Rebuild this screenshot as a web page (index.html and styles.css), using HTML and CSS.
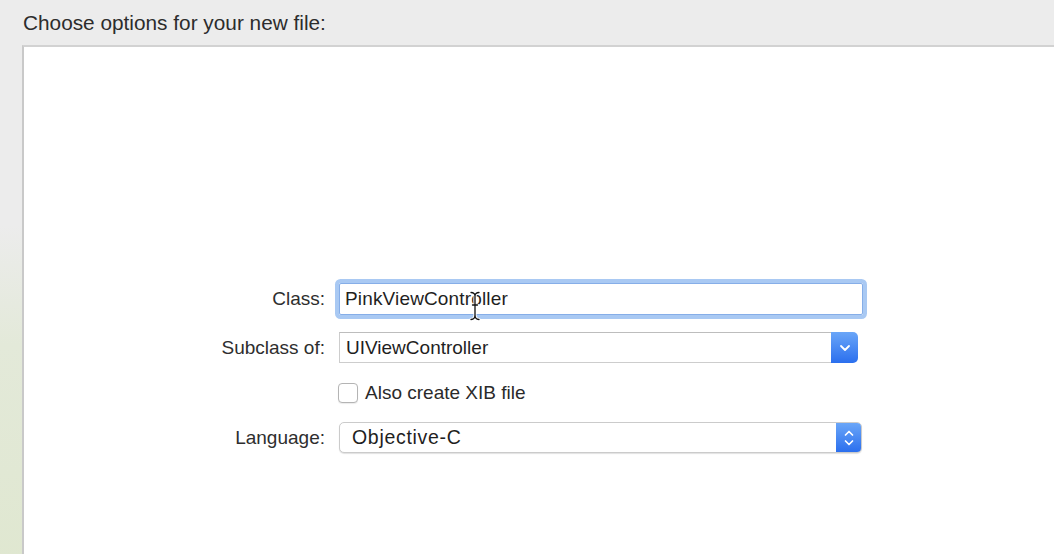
FILE: index.html
```html
<!DOCTYPE html>
<html>
<head>
<meta charset="utf-8">
<link rel="stylesheet" href="styles.css">
</head>
<body>
<div class="window">
  <div class="header">Choose options for your new file:</div>
  <div class="main">
    <div class="strip"></div>
    <div class="panel">
      <div class="form">
        <div class="row row-class">
          <label class="label">Class:</label>
          <div class="field text-field focused">
            <span class="value">PinkViewController</span>
            <svg class="ibeam" width="14" height="30" viewBox="0 0 14 30">
              <path d="M3 1.5 Q7 1.5 7 5 Q7 1.5 11 1.5 M7 5 L7 24 M3 28.5 Q7 28.5 7 24 Q7 28.5 11 28.5 M4.5 14 L9.5 14" fill="none" stroke="#fff" stroke-width="3.2" stroke-linecap="round"/>
              <path d="M3 1.5 Q7 1.5 7 5 Q7 1.5 11 1.5 M7 5 L7 24 M3 28.5 Q7 28.5 7 24 Q7 28.5 11 28.5 M4.5 14 L9.5 14" fill="none" stroke="#111" stroke-width="1.3" stroke-linecap="round"/>
            </svg>
          </div>
        </div>
        <div class="row row-sub">
          <label class="label">Subclass of:</label>
          <div class="field combo">
            <div class="combo-text"><span class="value">UIViewController</span></div>
            <div class="combo-btn">
              <svg width="12" height="8" viewBox="0 0 12 8"><path d="M2 2 L6 6 L10 2" fill="none" stroke="#fff" stroke-width="1.8" stroke-linecap="round" stroke-linejoin="round"/></svg>
            </div>
          </div>
        </div>
        <div class="row row-check">
          <span class="label"></span>
          <div class="check-wrap">
            <span class="checkbox"></span>
            <span class="check-text">Also create XIB file</span>
          </div>
        </div>
        <div class="row row-lang">
          <label class="label">Language:</label>
          <div class="field popup">
            <span class="value popup-value">Objective-C</span>
            <div class="popup-btn">
              <svg width="12" height="20" viewBox="0 0 12 20"><path d="M2.5 7 L6 3.5 L9.5 7 M2.5 13 L6 16.5 L9.5 13" fill="none" stroke="#fff" stroke-width="1.7" stroke-linecap="round" stroke-linejoin="round"/></svg>
            </div>
          </div>
        </div>
      </div>
    </div>
  </div>
</div>
</body>
</html>
```

FILE: styles.css
```css
* { box-sizing: border-box; }
html, body {
  margin: 0;
  padding: 0;
  width: 1054px;
  height: 554px;
  overflow: hidden;
  background: #ececec;
  font-family: "Liberation Sans", Arial, sans-serif;
  color: #2a2a2a;
}
.window {
  display: flex;
  flex-direction: column;
  height: 554px;
}
.header {
  height: 45px;
  padding-left: 23px;
  font-size: 20.8px;
  line-height: 45px;
  color: #2c2c2c;
  flex: none;
}
.main {
  flex: 1;
  display: flex;
}
.strip {
  width: 22px;
  flex: none;
  background: linear-gradient(to bottom, #ececec 0px, #ececec 180px, #e3e9d9 300px, #dfe7cf 554px);
}
.panel {
  flex: 1;
  background: #fff;
  border-left: 2px solid #c9c9c9;
  border-top: 2px solid #d2d2d2;
}
.form {
  padding-top: 236px;
  display: flex;
  flex-direction: column;
}
.row {
  display: flex;
  align-items: center;
}
.label {
  width: 301px;
  flex: none;
  text-align: right;
  font-size: 19px;
  color: #2e2e2e;
  margin-right: 14px;
}
.value {
  font-size: 19px;
  color: #1f1f1f;
  white-space: nowrap;
}
.row-class { height: 32px; }
.text-field {
  position: relative;
  width: 524px;
  height: 32px;
  border: 1px solid #86aee8;
  border-radius: 2px;
  box-shadow: 0 0 0 4px #a9c9f3;
  display: flex;
  align-items: center;
  padding-left: 5px;
}
.text-field .value { letter-spacing: 0.15px; }
.ibeam {
  position: absolute;
  left: 128px;
  top: 7px;
}
.row-sub { height: 31px; margin-top: 17px; }
.combo {
  width: 519px;
  height: 31px;
  display: flex;
}
.combo-text {
  flex: 1;
  border: 1px solid #cdcdcd;
  border-top-color: #bdbdbd;
  border-right: none;
  display: flex;
  align-items: center;
  padding-left: 6px;
}
.combo-btn {
  width: 27px;
  flex: none;
  border-radius: 0 5px 5px 0;
  background: linear-gradient(to bottom, #6aa6f8, #2b6fee);
  display: flex;
  align-items: center;
  justify-content: center;
}
.row-check { height: 20px; margin-top: 20px; }
.row-check .label { margin-right: 13px; }
.check-wrap {
  display: flex;
  align-items: center;
}
.checkbox {
  width: 20px;
  height: 20px;
  border: 1px solid #b4b4b4;
  border-radius: 4px;
  background: #fff;
  box-shadow: 0 1px 1px rgba(0,0,0,0.08);
}
.check-text {
  margin-left: 7px;
  font-size: 19px;
  color: #2a2a2a;
}
.row-lang { height: 31px; margin-top: 19px; }
.popup {
  width: 523px;
  height: 31px;
  display: flex;
  align-items: center;
  border: 1px solid #cbcbcb;
  border-radius: 5px;
  box-shadow: 0 1px 1px rgba(0,0,0,0.12);
  overflow: hidden;
  background: #fff;
}
.popup-value {
  flex: 1;
  padding-left: 12px;
  font-size: 19.5px;
  letter-spacing: 0.7px;
}
.popup-btn {
  width: 25px;
  height: 100%;
  flex: none;
  background: linear-gradient(to bottom, #6aa6f8, #2b6fee);
  display: flex;
  align-items: center;
  justify-content: center;
}
```
